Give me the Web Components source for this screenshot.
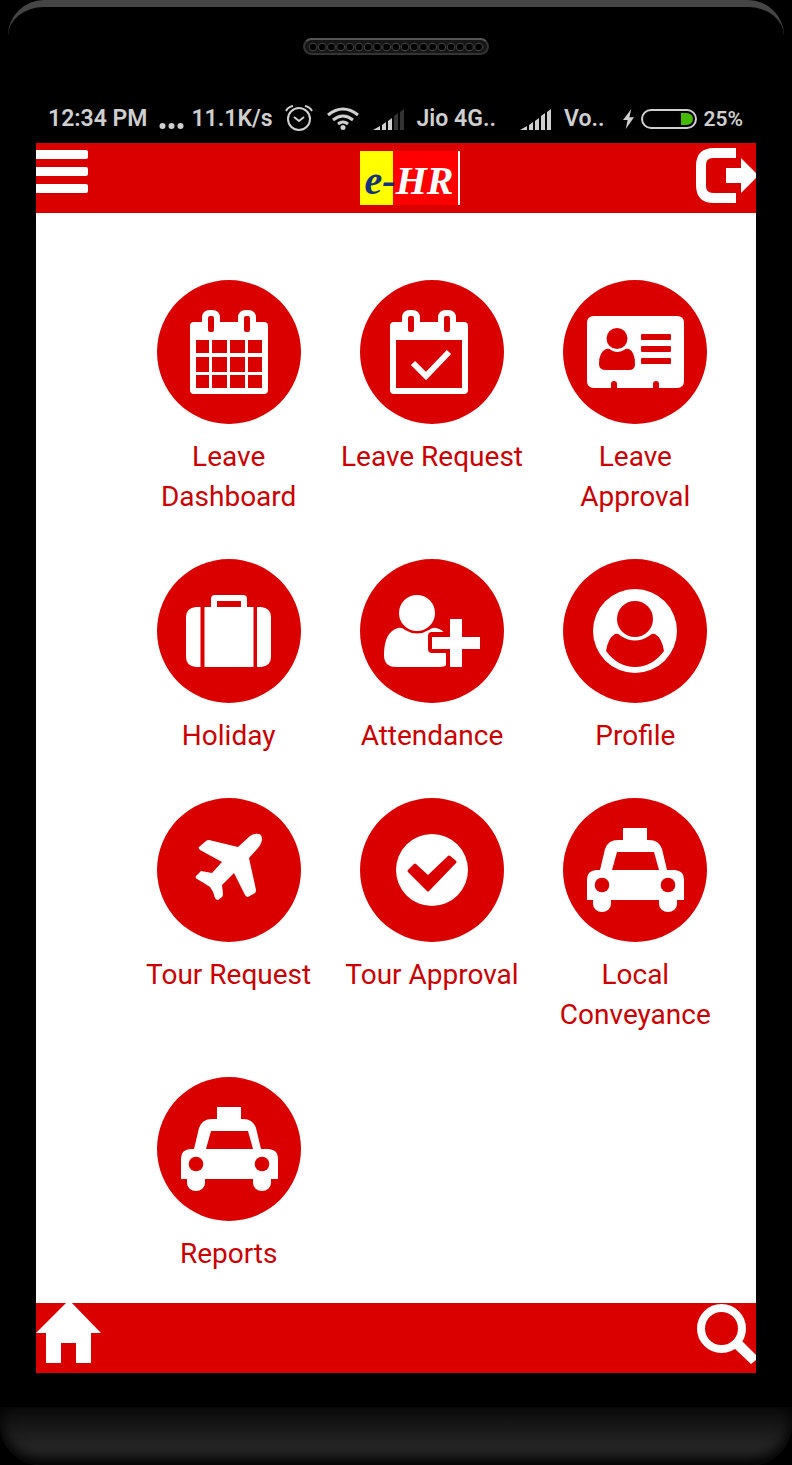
<!DOCTYPE html>
<html lang="en">
<head>
<meta charset="utf-8">
<meta name="viewport" content="width=device-width, initial-scale=1">
<title>e-HR</title>
<style>
  body {
    margin: 0;
    background: #000;
    font-family: Roboto, sans-serif;
    --brand: #da0000;
    --label: #cc0000;
    --status: #cfcfcf;
  }
</style>
</head>
<body>
<phone-frame>
  <status-bar></status-bar>
  <app-bar>
    <bar-button slot="start" icon="menu" label="Menu"></bar-button>
    <app-logo></app-logo>
    <bar-button slot="end" icon="logout" label="Log out"></bar-button>
  </app-bar>
  <tile-grid>
    <menu-tile icon="calendar">Leave Dashboard</menu-tile>
    <menu-tile icon="calendar-check">Leave Request</menu-tile>
    <menu-tile icon="card">Leave Approval</menu-tile>
    <menu-tile icon="suitcase">Holiday</menu-tile>
    <menu-tile icon="user-plus">Attendance</menu-tile>
    <menu-tile icon="profile">Profile</menu-tile>
    <menu-tile icon="plane">Tour Request</menu-tile>
    <menu-tile icon="check">Tour Approval</menu-tile>
    <menu-tile icon="taxi">Local Conveyance</menu-tile>
    <menu-tile icon="taxi">Reports</menu-tile>
  </tile-grid>
  <app-bar>
    <bar-button slot="start" icon="home" label="Home"></bar-button>
    <bar-button slot="end" icon="search" label="Search"></bar-button>
  </app-bar>
</phone-frame>

<script>
const red = 'fill="#da0000"';

// white shapes on a 144x144 red disc
const taxi = `
  <path d="M60 30h24v12h2q10 0 13 9l5 21h8q9 1 9 9v21h-7v4a9 8 0 0 1-18 0v-4H48v4a9 8 0 0 1-18 0v-4h-6V81q0-8 9-9h4l5-21q3-9 13-9h5z"/>
  <path ${red} d="M54 54h37l5 18H49z"/>
  <circle ${red} cx="39" cy="87" r="7.3"/><circle ${red} cx="105" cy="87" r="7.3"/>`;
const calendarTop = `
  <path d="M34 42h9v-4q0-8 8-8h2q8 0 8 8v4h18v-4q0-8 8-8h2q8 0 8 8v4h8q4 0 4 4v64q0 4-4 4H35q-4 0-4-4V46q0-4 4-4z"/>
  <rect ${red} x="49" y="36" width="6" height="16" rx="2"/>
  <rect ${red} x="85" y="36" width="6" height="16" rx="2"/>`;

const tileIcons = {
  calendar: `<g transform="translate(2 0)">${calendarTop}
    <path ${red} d="M37 60h13v13H37zM53 60h15v13H53zM71 60h15v13H71zM89 60h14v13H89zM37 77h13v15H37zM53 77h15v15H53zM71 77h15v15H71zM89 77h14v15H89zM37 95h13v13H37zM53 95h15v13H53zM71 95h15v13H71zM89 95h14v13H89z"/></g>`,
  'calendar-check': `<g transform="translate(-1 0)">${calendarTop}
    <path ${red} d="M37 60h66v48H37z"/></g>
    <path fill="none" stroke="#fff" stroke-width="6" d="M53 83l13 13 23-24"/>`,
  card: `
    <path d="M31 36h83q7 0 7 7v58q0 7-7 7H96v-4q0-3-3-3t-3 3v4H54v-4q0-3-3-3t-3 3v4H31q-7 0-7-7V43q0-7 7-7z"/>
    <circle ${red} cx="54" cy="58.5" r="10.5"/>
    <path ${red} d="M43 69q3-1 5 1 6 4 13 0 2-2 5-1 6 3 6 15 0 6-6 6H43q-7 0-7-6 0-12 7-15z"/>
    <rect ${red} x="78" y="54" width="30" height="6" rx="1"/><rect ${red} x="78" y="66" width="30" height="6" rx="1"/><rect ${red} x="78" y="78" width="30" height="6" rx="1"/>`,
  suitcase: `
    <path d="M43.5 48v60H39q-10-1-10-10V58q0-9 10-10zM100 48h4q10 1 10 10v40q0 9-10 10h-4zM47.500 48H54v-8q0-4 4-4h28q4 0 4 4v8h6.500v60h-49z"/>
    <path ${red} d="M60 42h24v6H60z"/>`,
  'user-plus': `
    <path d="M38 69q4-1 7 2 12 7 24 0 4-3 7-2 7 1 10 8l3 22q0 9-9 9H36q-12 0-12-12 0-23 14-27z"/>
    <path ${red} d="M72 73h14V57h20v16h18v21h-18v18H86V94H72q-4 0-4-4V77q0-4 4-4z"/>
    <circle cx="57" cy="54" r="18"/>
    <path d="M90 60h12v18h18v12h-18v18H90V90H72V78h18z"/>`,
  profile: `
    <circle cx="72" cy="72" r="42"/><circle ${red} cx="72" cy="60" r="18"/>
    <path ${red} d="M43 92q2-13 9-17 3-1 6 2 14 9 28 0 3-3 6-2 7 4 9 17-12 16-29 16T43 92z"/>`,
  plane: `<path d="M98 36q7-1 7 5 0 4-4 9L92 60l7 32q0 2-1 3l-7 4q-2 0-3-2L77 75 65 87l1 9q0 2-1 3l-4 3q-2 0-3-2-1-6-5-11-6-4-13-8-2-1-1-3l5-5 11 2 10-11-22-12q-2-2-1-3l7-6q1-1 3-1l29 7 12-11q3-2 5-2z"/>`,
  check: `
    <circle cx="72" cy="72" r="36"/>
    <path ${red} stroke="#da0000" stroke-width="3" stroke-linejoin="round" d="M49 73l6-6 13 12 21-20 6 5-27 28z"/>`,
  taxi,
};

const barIcons = {
  menu: `<svg width="52" height="50" viewBox="0 0 52 50"><path d="M0 7h50q2 0 2 2v5q0 2-2 2H0zM0 24h50q2 0 2 2v5q0 2-2 2H0zM0 41h50q2 0 2 2v5q0 2-2 2H0z"/></svg>`,
  logout: `<svg width="60" height="60" viewBox="0 0 60 60"><path d="M40 5v10H17q-7 0-7 7v21q0 7 7 7h23v10H18Q0 60 0 42V23Q0 5 18 5z"/><path d="M30 25h15V15l15 15v5L45 50V40H30z"/></svg>`,
  home: `<svg width="65" height="60" viewBox="0 0 65 60"><path d="M33-3l32 33h-10v30H40V40H25v20H10V30H0z"/></svg>`,
  search: `<svg width="60" height="62" viewBox="0 0 60 62"><circle cx="25.500" cy="25.500" r="20.500" fill="none" stroke="#fff" stroke-width="8"/><path d="M45 37l15 15v5l-5 4-18-17z"/></svg>`,
};

const signal = (weak) => `
  <svg width="32" height="22" viewBox="0 0 32 22">
    <path d="M0 22l7-4v4zM9 17l4-3v8H9zM15 13l4-3v12h-4z"/>
    <path ${weak ? 'fill="#333"' : ''} d="M21 8l4-3v17h-4zM27 4l4-3v21h-4z"/>
  </svg>`;

class BaseElement extends HTMLElement {
  constructor() {
    super();
    this.attachShadow({ mode: 'open' });
  }
  connectedCallback() {
    this.shadowRoot.innerHTML = this.render();
  }
}

class PhoneFrame extends BaseElement {
  render() {
    return `
      <style>
        :host { display: block; }
        .top {
          box-sizing: border-box;
          height: 95px;
          margin: 0 8px;
          padding-top: 31px;
          border-top: 7px solid #454545;
          border-radius: 36px 36px 0 0;
        }
        .speaker {
          box-sizing: border-box;
          width: 186px;
          height: 17px;
          margin: 0 auto;
          border: 2px solid #343434;
          border-top-color: #555;
          border-radius: 9px;
          background: #161616;
        }
        .speaker svg { display: block; margin: 0 auto; }
        .screen { margin: 0 36px; }
        .chin {
          height: 58px;
          margin-top: 34px;
          border-radius: 0 0 40px 40px;
          background: linear-gradient(#0a0a0a, #282828 75%);
          box-shadow: inset 0 -7px 14px #000;
        }
      </style>
      <div class="top">
        <div class="speaker">
          <svg width="176" height="13" viewBox="0 0 176 13">
            <defs><pattern id="holes" width="9.200" height="13" patternUnits="userSpaceOnUse"><circle cx="5" cy="7" r="3.800" fill="#000" stroke="#444"/></pattern></defs>
            <rect width="176" height="13" fill="url(#holes)"/>
          </svg>
        </div>
      </div>
      <div class="screen"><slot></slot></div>
      <div class="chin"></div>`;
  }
}

class StatusBar extends BaseElement {
  render() {
    return `
      <style>
        :host {
          display: flex;
          align-items: center;
          gap: 18px;
          box-sizing: border-box;
          height: 48px;
          padding: 0 13px 0 12px;
          color: var(--status);
          font-size: 23px;
          line-height: 28px;
          font-weight: 600;
          white-space: nowrap;
        }
        div { display: flex; align-items: center; gap: 12px; }
        .network { margin-right: auto; }
        .speed, .power { gap: 7px; }
        .small { font-size: 21px; }
        svg { display: block; fill: var(--status); }
      </style>
      <div class="network">
        <span>12:34 PM</span>
        <div class="speed">
          <svg width="25" height="22" viewBox="0 0 25 22"><circle cx="3.500" cy="18" r="3"/><circle cx="12.500" cy="18" r="3"/><circle cx="21.500" cy="18" r="3"/></svg>
          <span>11.1K/s</span>
        </div>
        <svg width="28" height="28" viewBox="0 0 28 28" style="fill:none" stroke="#cfcfcf" stroke-width="2">
          <circle cx="14" cy="14" r="11"/><path d="M9 12l5 4 5-4M1 6q2-4 7-5M27 6q-2-4-7-5"/>
        </svg>
        <svg width="36" height="26" viewBox="0 0 36 26">
          <g fill="none" stroke="#cfcfcf" stroke-width="3"><path d="M3 9q15-12 30 0M8 14q10-8 20 0M13 18q5-4 10 0"/></g><circle cx="18" cy="21.500" r="2.500"/>
        </svg>
        ${signal(true)}
        <span>Jio 4G..</span>
      </div>
      <div>
        ${signal(false)}
        <span>Vo..</span>
      </div>
      <div class="power">
        <svg width="11" height="22" viewBox="0 0 12 22"><path d="M9 0L0 12h5L3 22l9-13H7z"/></svg>
        <svg width="56" height="22" viewBox="0 0 56 22">
          <rect x="1" y="2" width="54" height="18" rx="9" fill="none" stroke="#cfcfcf" stroke-width="2"/>
          <path fill="#44bb00" d="M40 5h6q6 1 6 6t-6 6h-6z"/>
        </svg>
        <span class="small">25%</span>
      </div>`;
  }
}

class AppBar extends BaseElement {
  render() {
    return `
      <style>
        :host {
          display: grid;
          grid-template-columns: 45% auto 1fr;
          height: 70px;
          background: var(--brand);
        }
        .middle { align-self: center; }
        .end { justify-self: end; }
      </style>
      <div><slot name="start"></slot></div>
      <div class="middle"><slot></slot></div>
      <div class="end"><slot name="end"></slot></div>`;
  }
}

class BarButton extends BaseElement {
  render() {
    return `
      <style>
        :host { display: block; }
        button {
          display: block;
          padding: 0;
          border: 0;
          background: none;
          cursor: pointer;
        }
        svg { display: block; fill: #fff; }
      </style>
      <button type="button" aria-label="${this.getAttribute('label')}">${barIcons[this.getAttribute('icon')]}</button>`;
  }
}

class AppLogo extends BaseElement {
  render() {
    return `
      <style>
        :host {
          display: block;
          box-sizing: border-box;
          width: 100px;
          height: 54px;
          border-right: 2px solid #fff;
          background: linear-gradient(90deg, #ff0 33px, #f00 33px);
          color: #fff;
          font: italic bold 40px/60px "Liberation Serif", serif;
          text-align: center;
          white-space: nowrap;
        }
        span { color: #13317c; }
      </style>
      <span>e-</span>HR`;
  }
}

class TileGrid extends BaseElement {
  render() {
    return `
      <style>
        :host {
          display: grid;
          grid-template-columns: repeat(3, 1fr);
          row-gap: 42px;
          padding: 67px 19px 29px 91px;
          background: #fff;
        }
      </style>
      <slot></slot>`;
  }
}

class MenuTile extends BaseElement {
  render() {
    return `
      <style>
        :host { display: block; }
        a {
          display: flex;
          flex-direction: column;
          align-items: center;
          gap: 13px;
          padding: 0 8px;
          color: var(--label);
          font-size: 28px;
          line-height: 40px;
          text-align: center;
          text-decoration: none;
        }
        svg {
          display: block;
          border-radius: 50%;
          background: var(--brand);
          fill: #fff;
        }
      </style>
      <a href="#">
        <svg width="144" height="144" viewBox="0 0 144 144" aria-hidden="true">${tileIcons[this.getAttribute('icon')]}</svg>
        <span><slot></slot></span>
      </a>`;
  }
}

customElements.define('phone-frame', PhoneFrame);
customElements.define('status-bar', StatusBar);
customElements.define('app-bar', AppBar);
customElements.define('bar-button', BarButton);
customElements.define('app-logo', AppLogo);
customElements.define('tile-grid', TileGrid);
customElements.define('menu-tile', MenuTile);
</script>
</body>
</html>
